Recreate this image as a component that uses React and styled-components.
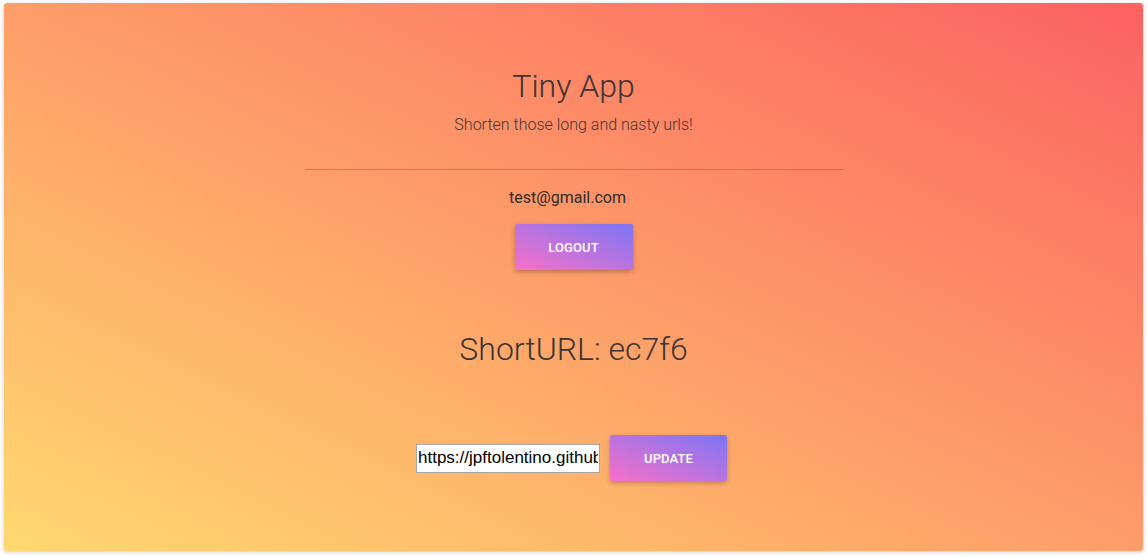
import React from "react";
import styled, { createGlobalStyle } from "styled-components";

const Global = createGlobalStyle`
  html, body { margin: 0; padding: 0; background: #ffffff; }
  body { font-family: Roboto, "Noto Sans", sans-serif; }
  * { box-sizing: border-box; }
`;

const Page = styled.div`
  padding: 3px 5px 6px 4px;
`;

const Card = styled.main`
  height: 548px;
  border-radius: 3px;
  background: linear-gradient(to top right, #ffd86f 0%, #fc6262 100%);
  box-shadow: 0 1px 4px rgba(0, 0, 0, 0.22);
  display: flex;
  flex-direction: column;
  align-items: center;
  padding-top: 63px;
  color: #333333;
`;

const Title = styled.h1`
  margin: 0;
  font-family: Roboto, sans-serif;
  font-weight: 300;
  font-size: 32px;
  line-height: 40px;
  color: #3a3434;
`;

const Subtitle = styled.p`
  margin: 9px 0 0;
  font-weight: 300;
  font-size: 16px;
  line-height: 20px;
  color: #3d3838;
`;

const Rule = styled.hr`
  width: 538px;
  margin: 34px 0 0;
  border: 0;
  border-top: 1px solid rgba(170, 70, 40, 0.45);
`;

const Email = styled.div`
  margin: 18px 12px 0 0;
  font-size: 16px;
  line-height: 19px;
  font-weight: 400;
  color: #2f2a2a;
`;

const GradientButton = styled.button`
  width: ${(p) => p.$w}px;
  height: 46px;
  border: 0;
  border-radius: 2px;
  background: linear-gradient(to top right, #f870c8 0%, #7b76f6 100%);
  box-shadow: 0 2px 5px rgba(0, 0, 0, 0.26);
  color: #ffffff;
  font-family: Roboto, sans-serif;
  font-weight: 500;
  font-size: 13px;
  letter-spacing: 0.1px;
  text-transform: uppercase;
  cursor: pointer;
  flex-shrink: 0;
`;

const LogoutButton = styled(GradientButton)`
  margin-top: 17px;
`;

const ShortTitle = styled.h2`
  margin: 60px 0 0;
  font-weight: 300;
  font-size: 32px;
  line-height: 38px;
  color: #3a3434;
`;

const Form = styled.form`
  margin: 67px 4px 0 0;
  display: flex;
  align-items: center;
  gap: 10px;
`;

const UrlInput = styled.input`
  width: 184px;
  height: 29px;
  padding: 1px 1px;
  border: 1px solid #a6a6a6;
  background: #ffffff;
  font-family: "Liberation Sans", Arial, sans-serif;
  font-size: 17px;
  color: #000000;
  outline: none;
`;

export default function App() {
  return (
    <>
      <Global />
      <Page>
        <Card>
          <Title>Tiny App</Title>
          <Subtitle>Shorten those long and nasty urls!</Subtitle>
          <Rule />
          <Email>test@gmail.com</Email>
          <LogoutButton $w={118}>Logout</LogoutButton>
          <ShortTitle>ShortURL: ec7f6</ShortTitle>
          <Form onSubmit={(e) => e.preventDefault()}>
            <UrlInput
              type="text"
              defaultValue="https://jpftolentino.github.io/"
            />
            <GradientButton $w={117} type="submit">
              Update
            </GradientButton>
          </Form>
        </Card>
      </Page>
    </>
  );
}
